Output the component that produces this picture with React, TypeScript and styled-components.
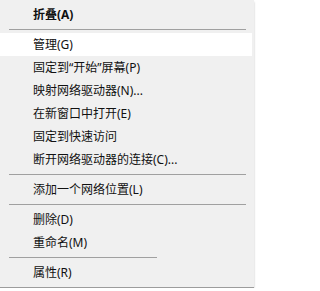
import React from 'react'
import styled, { createGlobalStyle } from 'styled-components'

type Entry =
  | { kind: 'item'; label: string; bold?: boolean; hover?: boolean }
  | { kind: 'sep'; short?: boolean }

const entries: Entry[] = [
  { kind: 'item', label: '折叠(A)', bold: true },
  { kind: 'sep' },
  { kind: 'item', label: '管理(G)', hover: true },
  { kind: 'item', label: '固定到“开始”屏幕(P)' },
  { kind: 'item', label: '映射网络驱动器(N)...' },
  { kind: 'item', label: '在新窗口中打开(E)' },
  { kind: 'item', label: '固定到快速访问' },
  { kind: 'item', label: '断开网络驱动器的连接(C)...' },
  { kind: 'sep' },
  { kind: 'item', label: '添加一个网络位置(L)' },
  { kind: 'sep' },
  { kind: 'item', label: '删除(D)' },
  { kind: 'item', label: '重命名(M)' },
  { kind: 'sep', short: true },
  { kind: 'item', label: '属性(R)' }
]

const App: React.FC = () => {
  return (
    <>
      <GlobalStyle />
      <Menu>
        {entries.map((e, i) =>
          e.kind === 'sep' ? (
            <Separator key={i}>
              <Line $short={e.short} />
            </Separator>
          ) : (
            <Item key={i} $bold={e.bold} $hover={e.hover}>
              {e.label}
            </Item>
          )
        )}
      </Menu>
    </>
  )
}

const GlobalStyle = createGlobalStyle`
  html, body {
    margin: 0;
    padding: 0;
    background: #ffffff;
  }
  body {
    font-family: "Noto Sans", "Noto Sans CJK SC", sans-serif;
  }
`

const Menu = styled.div`
  width: 254px;
  box-sizing: border-box;
  padding: 3px 0;
  background: #f0f0f0;
  border-bottom: 1px solid #9c9c9c;
  box-shadow: 0 2px 2px rgba(0, 0, 0, 0.25);
  display: flex;
  flex-direction: column;
`

const Item = styled.div<{ $bold?: boolean; $hover?: boolean }>`
  height: 23px;
  display: flex;
  align-items: center;
  padding-left: 33px;
  margin-right: 2px;
  font-size: 12px;
  line-height: 23px;
  color: #111;
  font-weight: ${props => (props.$bold ? 700 : 400)};
  background: ${props => (props.$hover ? '#ffffff' : 'transparent')};
  white-space: nowrap;
`

const Separator = styled.div`
  height: 7px;
  display: flex;
  align-items: center;
  padding-left: 9px;
`

const Line = styled.div<{ $short?: boolean }>`
  height: 1px;
  width: ${props => (props.$short ? '148px' : '237px')};
  background: #a0a0a0;
`

export default App
